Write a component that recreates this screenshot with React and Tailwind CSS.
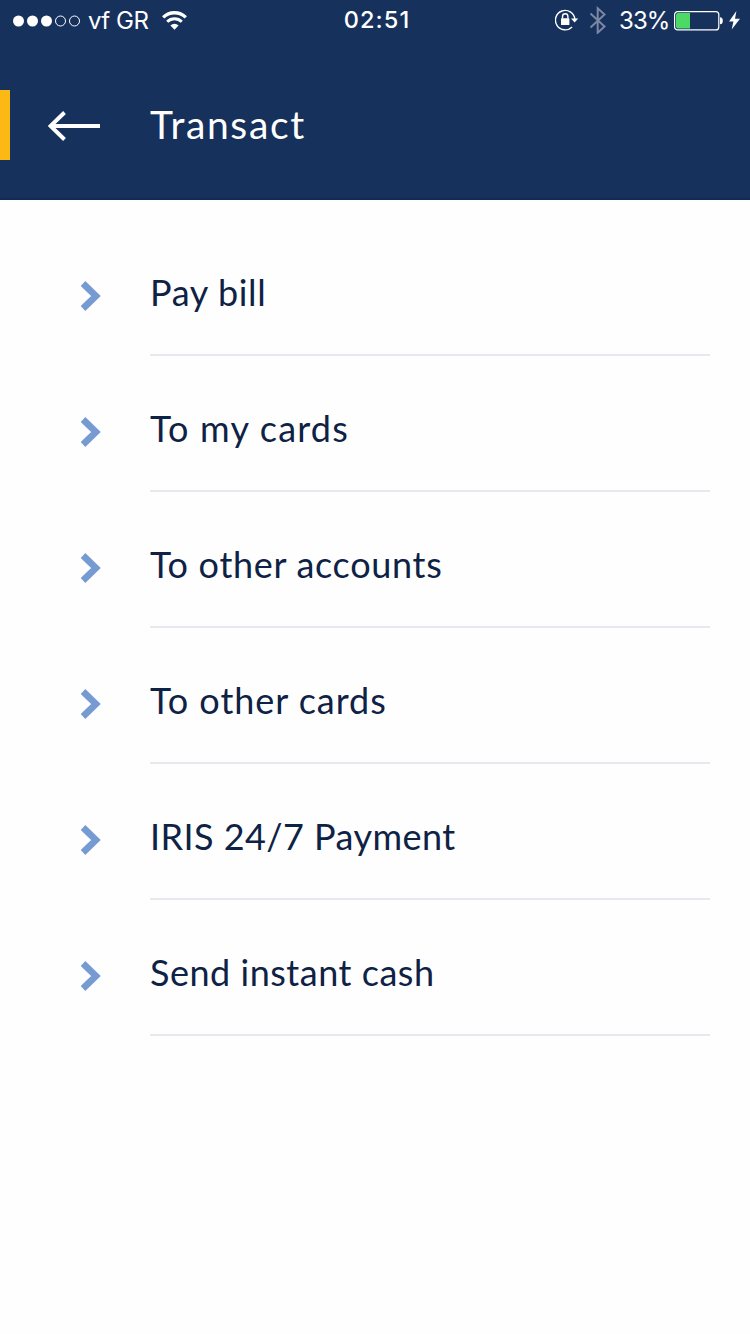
const menuItems = [
  { label: "Pay bill", style: "tracking-[0.65px]" },
  { label: "To my cards", style: "tracking-[1.2px]" },
  { label: "To other accounts", style: "tracking-[0.7px]" },
  { label: "To other cards", style: "tracking-[0.95px]" },
  { label: "IRIS 24/7 Payment", style: "tracking-[0.45px]" },
  { label: "Send instant cash", style: "tracking-[0.52px]" },
];

const StatusBar = () => {
  return (
    <div className="grid h-10 grid-cols-3 items-center font-['Inter',sans-serif] text-2xl leading-[38px] text-white">
      <div className="flex items-center whitespace-nowrap pl-3">
        {/* Signal */}
        <svg className="mt-px" width="69" height="12" viewBox="0 0 69 12" fill="none">
          <circle cx="6.5" cy="6" r="5.5" fill="#fff" />
          <circle cx="20.5" cy="6" r="5.5" fill="#fff" />
          <circle cx="34.5" cy="6" r="5.5" fill="#fff" />
          <circle cx="48.5" cy="6" r="5" stroke="#fff" />
          <circle cx="62.5" cy="6" r="5" stroke="#fff" />
        </svg>
        <span className="ml-[7px] mt-0.5 w-[61px] tracking-[-0.5px]">vf GR</span>
        <svg className="ml-[13px]" width="25" height="19" viewBox="0 0 25 19" fill="none">
          <path d="M1.2 6.4a16 16 0 0 1 22.6 0" stroke="#fff" strokeWidth="3.3" />
          <path d="M5.2 10.8a10.4 10.4 0 0 1 14.6 0" stroke="#fff" strokeWidth="3" />
          <path d="M8.4 14.4a5.9 5.9 0 0 1 8.2 0L12.5 18.7z" fill="#fff" />
        </svg>
      </div>

      <div className="text-center text-[23.5px] font-medium tracking-[1.1px]">
        <span className="ml-1">02:51</span>
      </div>

      <div className="flex items-center justify-end whitespace-nowrap pr-2.5">
        {/* Rotation lock */}
        <svg width="24" height="22" viewBox="0 0 24 22" fill="none">
          <path d="M17.1 17.9A9.7 9.7 0 1 1 19.8 10" stroke="#fff" strokeWidth="1.4" />
          <path d="M16 9.5h7.2L19.6 13.5z" fill="#fff" />
          <rect x="6" y="9.3" width="8.4" height="6.7" rx="0.6" fill="#fff" />
          <path d="M7.5 9.5V7.4a2.7 2.7 0 0 1 5.4 0v2.1" stroke="#fff" strokeWidth="1.4" />
        </svg>
        {/* Bluetooth */}
        <svg className="ml-2.5" width="18" height="28" viewBox="0 0 18 28" fill="none">
          <path d="M1.5 7.5l14 13-6.8 6.2V2.3l6.8 6.2-14 13" stroke="#7a88a3" strokeWidth="2" />
        </svg>
        <span className="ml-3 mt-0.5 w-[50px] tracking-[-0.9px]">33%</span>
        <svg className="ml-[5px] mt-px" width="49" height="20" viewBox="0 0 49 20" fill="none">
          <rect x="0.6" y="0.6" width="44.2" height="18.3" rx="3" stroke="#fff" strokeWidth="1.2" />
          <path d="M4 2h12v15.5H4A2 2 0 0 1 2 15.5V4a2 2 0 0 1 2-2z" fill="#4cd964" />
          <path d="M46 6.3q2.8 0 2.8 3.5T46 13.3z" fill="#fff" />
        </svg>
        <svg className="ml-[6px]" width="11" height="19" viewBox="0 0 11 19">
          <path d="M7.4 0L0 10.5h4.4L2.7 18.5 11 7.7H6z" fill="#fff" />
        </svg>
      </div>
    </div>
  );
};

const App = () => {
  return (
    <div className="min-h-screen bg-[#fefefe] font-['Lato',sans-serif]">
      <header className="h-[200px] border-b-2 border-[#132b52] bg-[#17315d]">
        <StatusBar />
        <div className="mt-[50px] flex h-[70px] items-center border-l-10 border-[#fdb913] text-white">
          <button aria-label="Back" className="ml-[38px] mt-0.5">
            <svg width="52" height="30" viewBox="0 0 52 30" fill="none">
              <path d="M16.5 1.5L2.5 15l14 13.5M3 15h49" stroke="#fff" strokeWidth="4" />
            </svg>
          </button>
          <h1 className="mb-0.5 ml-[50px] text-[39px] leading-[70px] tracking-[1.65px]">Transact</h1>
        </div>
      </header>

      <ul className="pt-5">
        {menuItems.map((item) => (
          <li key={item.label} className="flex h-[136px] cursor-pointer pl-[79px] pr-10">
            <svg className="mt-[60px] shrink-0" width="24" height="32" viewBox="0 0 24 32" fill="none">
              <path d="M4 3.5L17 16 4 28.5" stroke="#769bd3" strokeWidth="6.6" />
            </svg>
            <div className="ml-[47px] flex-1 border-b-2 border-[#e8e9ee] pt-[47px] text-4xl leading-[50px] text-[#0e2245]">
              <span className={item.style}>{item.label}</span>
            </div>
          </li>
        ))}
      </ul>
    </div>
  );
};

export default App;
